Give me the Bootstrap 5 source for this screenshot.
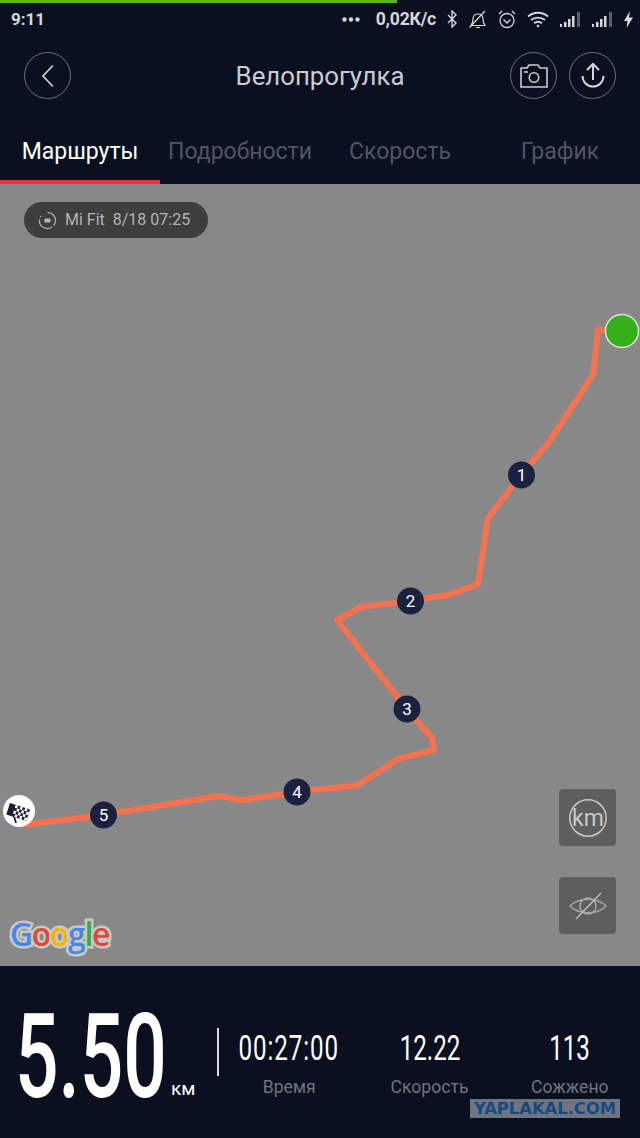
<!DOCTYPE html>
<html lang="ru">
<head>
    <meta charset="utf-8"/>
    <title>Велопрогулка</title>
    <link href="https://cdn.jsdelivr.net/npm/bootstrap@5.3.2/dist/css/bootstrap.min.css" rel="stylesheet"/>
    <style>
        html, body { height: 1138px; overflow: hidden; }
        body { background: #0a101f; font-family: Roboto, "Noto Sans", sans-serif; color: #fff; }
        .load-bar { height: 3px; width: 397px; background: #5cb81a; }
        .status-row { height: 33px; padding: 0 7px 0 11px; font-size: 17px; font-weight: 700; color: #d5d7db; }
        .status-icons { gap: 11px; }
        .status-speed { margin-left: 5px; font-size: 17.6px; letter-spacing: -.2px; }
        .top-row { height: 74px; padding: 5px 24px 0; }
        .top-side { flex: 1 1 0; gap: 12px; }
        .top-title { font-size: 25.8px; color: #c9ccd2; line-height: 1; padding-top: 3px; }
        .ring-btn { width: 47px; height: 47px; border: 1px solid #6f727a; border-radius: 50%; background: transparent; padding: 0; }
        .tab-row { height: 74px; }
        .tab-item { font-size: 23px; color: #4f5563; padding-top: 25px; }
        .tab-item.is-active { color: #fff; border-bottom: 4px solid #e8352a; }
        .map-area { background: #888; height: 782px; }
        .route-svg { left: 0; top: 0; }
        .src-pill { margin: 18px 0 0 24px; height: 36px; width: 184px; border-radius: 18px; background: #3e3e3e; color: #b4b4b4; font-size: 16px; gap: 8px; padding-left: 14px; }
        .map-tools { right: 24px; top: 605px; gap: 31px; }
        .tool-btn { width: 57px; height: 57px; border-radius: 4px; background: #5e5e5e; border: 0; padding: 0; }
        .google-mark { left: 10px; top: 734px; font-size: 32px; font-weight: 600; line-height: 1; letter-spacing: -1.4px; font-family: "Open Sans", Roboto, sans-serif; }
        .google-mark span { -webkit-text-stroke: 5px #c8c8c4; paint-order: stroke fill; }
        .g-b { color: #4a86e8; } .g-r { color: #e0483a; } .g-y { color: #f4b400; } .g-g { color: #35a853; }
        .stats-row { height: 172px; }
        .big-box { width: 217px; padding-left: 15px; padding-top: 33px; }
        .cond-num { display: inline-block; transform-origin: left center; font-weight: 500; white-space: nowrap; }
        .big-val { font-size: 116px; line-height: 116px; width: 146px; transform: scaleX(.66); }
        .big-unit { font-size: 19px; left: 171px; top: 113px; line-height: 1; }
        .v-line { width: 2px; height: 48px; background: #d8dade; margin-top: 62px; }
        .stat-col { flex: 1 1 0; min-width: 0; padding-top: 64px; }
        .stat-val { font-size: 35px; line-height: 38px; transform: scaleX(.69); transform-origin: center; font-weight: 400; }
        .stat-time { letter-spacing: 1.3px; }
        .stat-lbl { font-size: 17.6px; color: #70747f; line-height: 20px; margin-top: 9px; }
        .site-stamp { right: 20px; bottom: 20px; width: 150px; height: 19px; background: #6e7480; color: #174a80; font-family: "DejaVu Sans", sans-serif; font-weight: 700; font-size: 16.5px; line-height: 19px; letter-spacing: -.1px; }
    </style>
</head>
<body>
<div class="load-bar"></div>
<div class="status-row d-flex justify-content-between align-items-center">
    <span>9:11</span>
    <div class="status-icons d-flex align-items-center">
        <svg width="18" height="5" viewBox="0 0 18 5" fill="#d5d7db"><circle cx="2.5" cy="2.5" r="2.2"/><circle cx="9" cy="2.5" r="2.2"/><circle cx="15.5" cy="2.5" r="2.2"/></svg>
        <span class="status-speed">0,02К/с</span>
        <svg width="10" height="18" viewBox="0 0 10 18" fill="none" stroke="#d5d7db" stroke-width="1.4"><path d="M1 5l8 8-4 4V1l4 4-8 8"/></svg>
        <svg width="19" height="19" viewBox="0 0 19 19" fill="none" stroke="#d5d7db" stroke-width="1.2"><path d="M3 15.5c1.5-2 2-3.500 2-6.500 0-3 2-5 5-5s5 2 5 5c0 3 .5 4.500 2 6.500z"/><path d="M8 17.500h4M1.500 17.500 17 1"/></svg>
        <svg width="18" height="19" viewBox="0 0 18 19" fill="none" stroke="#d5d7db" stroke-width="1.3"><circle cx="9" cy="10.500" r="7"/><path d="M5.500 9.500 9 13l3.500-3.500M1 4l3-3M17 4l-3-3"/></svg>
        <svg width="22" height="17" viewBox="0 0 22 17" fill="none" stroke="#d5d7db" stroke-width="1.8"><path d="M1 5.500c5.500-5 14.500-5 20 0M4 9c3.800-3.300 10.200-3.300 14 0M7 12.300c2.300-1.800 5.700-1.800 8 0"/><circle cx="11" cy="15" r="1.300" fill="#d5d7db" stroke="none"/></svg>
        <svg width="21" height="15" viewBox="0 0 21 15"><g fill="#d5d7db"><rect x="0" y="12" width="2" height="3"/><rect x="4" y="10" width="2.500" height="5"/><rect x="8" y="7" width="2.500" height="8"/><rect x="12" y="4" width="2.500" height="11"/></g><rect x="17" y="0" width="3" height="15" fill="#5a5e68"/></svg>
        <svg width="21" height="15" viewBox="0 0 21 15"><g fill="#d5d7db"><rect x="0" y="12" width="2" height="3"/><rect x="4" y="10" width="2.500" height="5"/><rect x="8" y="7" width="2.500" height="8"/><rect x="12" y="4" width="2.500" height="11"/></g><rect x="17" y="0" width="3" height="15" fill="#5a5e68"/></svg>
        <svg width="9" height="17" viewBox="0 0 9 17" fill="#d5d7db"><path d="M6 0 0 10h3.500L2.500 17 9 6.500H5z"/></svg>
    </div>
</div>
<div class="top-row d-flex align-items-center">
    <div class="top-side d-flex">
        <button class="ring-btn d-flex align-items-center justify-content-center" type="button" aria-label="Назад">
            <svg width="14" height="24" viewBox="0 0 14 24" fill="none" stroke="#c9ccd2" stroke-width="1.800"><path d="M12 1.500 2 12l10 10.500"/></svg>
        </button>
    </div>
    <div class="top-title">Велопрогулка</div>
    <div class="top-side d-flex justify-content-end">
        <button class="ring-btn d-flex align-items-center justify-content-center" type="button" aria-label="Фото">
            <svg width="28" height="24" viewBox="0 0 28 24" fill="none" stroke="#c9ccd2" stroke-width="1.600"><path d="M1 4h6l2-3h9l2 3h7v19H1z"/><circle cx="14" cy="13.500" r="4.700"/><path d="M4 8h4"/></svg>
        </button>
        <button class="ring-btn d-flex align-items-center justify-content-center" type="button" aria-label="Поделиться">
            <svg width="28" height="28" viewBox="0 0 28 28" fill="none" stroke="#d5d7db" stroke-width="2"><path d="M14 18V2M8 8l6-6 6 6"/><path d="M3.500 14a10.500 10.500 0 0 0 21 0"/></svg>
        </button>
    </div>
</div>
<div class="tab-row row g-0 text-center">
    <div class="col-3 tab-item is-active">Маршруты</div>
    <div class="col-3 tab-item">Подробности</div>
    <div class="col-3 tab-item">Скорость</div>
    <div class="col-3 tab-item">График</div>
</div>

<div class="map-area position-relative">
    <svg class="route-svg position-absolute" width="640" height="782" viewBox="0 184 640 782" font-family="Roboto, sans-serif">
        <polyline fill="none" stroke="#f4724f" stroke-width="6" stroke-linejoin="round" points="612,330 598,330 593,375 549,442 521,475 488,518 478,584 452,594 410,601 361,607 337,620 407,709 432,738 434,750 398,759 358,785 297,792 241,800 218,796 103,815 22,825"/>
        <circle cx="622" cy="331" r="16.500" fill="#35b018" stroke="#dfe3da" stroke-width="1.500"/>
        <g fill="#1c2140">
            <circle cx="521.500" cy="475" r="13.500"/>
            <circle cx="410.500" cy="601" r="13.500"/>
            <circle cx="407" cy="709" r="13.500"/>
            <circle cx="297" cy="792" r="13.500"/>
            <circle cx="103.500" cy="815" r="13.500"/>
        </g>
        <g fill="#fff" font-size="17" text-anchor="middle">
            <text x="521.500" y="481">1</text>
            <text x="410.500" y="607">2</text>
            <text x="407" y="715">3</text>
            <text x="297" y="798">4</text>
            <text x="103.500" y="821">5</text>
        </g>
        <circle cx="19" cy="811" r="16" fill="#fff"/>
        <path d="M16 823 10.500 804" stroke="#1a1f33" stroke-width="1.800"/>
        <g transform="rotate(18 10 803)">
            <rect x="10" y="803" width="21" height="12" fill="#1a1f33"/>
            <g fill="#fff">
                <rect x="16" y="803" width="2.500" height="3"/><rect x="21" y="803" width="2.500" height="3"/><rect x="26" y="803" width="2.500" height="3"/>
                <rect x="18.500" y="806" width="2.500" height="3"/><rect x="23.500" y="806" width="2.500" height="3"/><rect x="28.500" y="806" width="2.500" height="3"/>
                <rect x="16" y="809" width="2.500" height="3"/><rect x="21" y="809" width="2.500" height="3"/><rect x="26" y="809" width="2.500" height="3"/>
                <rect x="18.500" y="812" width="2.500" height="3"/><rect x="23.500" y="812" width="2.500" height="3"/><rect x="28.500" y="812" width="2.500" height="3"/>
            </g>
        </g>
    </svg>
    <div class="src-pill d-inline-flex align-items-center position-relative">
        <svg width="19" height="19" viewBox="0 0 19 19" fill="none" stroke="#b4b4b4" stroke-width="1.200"><path d="M9.500 1.500a8 8 0 1 1-6.500 3.300" stroke-dasharray="18 2.500"/><path d="M6.500 7.500h6v4h-6z" fill="#b4b4b4" stroke="none"/></svg>
        <span>Mi Fit&nbsp; 8/18 07:25</span>
    </div>
    <div class="map-tools position-absolute d-flex flex-column">
        <button class="tool-btn d-flex align-items-center justify-content-center" type="button" aria-label="Км">
            <svg width="40" height="40" viewBox="0 0 40 40" font-family="Roboto, sans-serif"><circle cx="20" cy="20" r="18.200" fill="none" stroke="#c8c8c8" stroke-width="1.500"/><text x="20" y="28" fill="#c8c8c8" font-size="23" text-anchor="middle">km</text></svg>
        </button>
        <button class="tool-btn d-flex align-items-center justify-content-center" type="button" aria-label="Скрыть">
            <svg width="38" height="28" viewBox="0 0 38 28" fill="none" stroke="#a8a8a8" stroke-width="1.500"><path d="M1 14C10 5 28 5 37 14 28 23 10 23 1 14z"/><circle cx="19" cy="14" r="8"/><path d="M7 27 32 1" stroke="#bcbcbc"/></svg>
        </button>
    </div>
    <div class="google-mark position-absolute"><span class="g-b">G</span><span class="g-r">o</span><span class="g-y">o</span><span class="g-b">g</span><span class="g-g">l</span><span class="g-r">e</span></div>
</div>

<div class="stats-row d-flex position-relative">
    <div class="big-box position-relative">
        <span class="cond-num big-val">5.50</span>
        <span class="big-unit position-absolute">км</span>
    </div>
    <div class="v-line"></div>
    <div class="stat-col d-flex flex-column align-items-center">
        <div class="cond-num stat-val stat-time">00:27:00</div>
        <div class="stat-lbl">Время</div>
    </div>
    <div class="stat-col d-flex flex-column align-items-center">
        <div class="cond-num stat-val">12.22</div>
        <div class="stat-lbl">Скорость</div>
    </div>
    <div class="stat-col d-flex flex-column align-items-center">
        <div class="cond-num stat-val">113</div>
        <div class="stat-lbl">Сожжено</div>
    </div>
    <div class="site-stamp position-absolute text-center">YAPLAKAL.COM</div>
</div>
<script src="https://cdn.jsdelivr.net/npm/bootstrap@5.3.2/dist/js/bootstrap.bundle.min.js"></script>
</body>
</html>
